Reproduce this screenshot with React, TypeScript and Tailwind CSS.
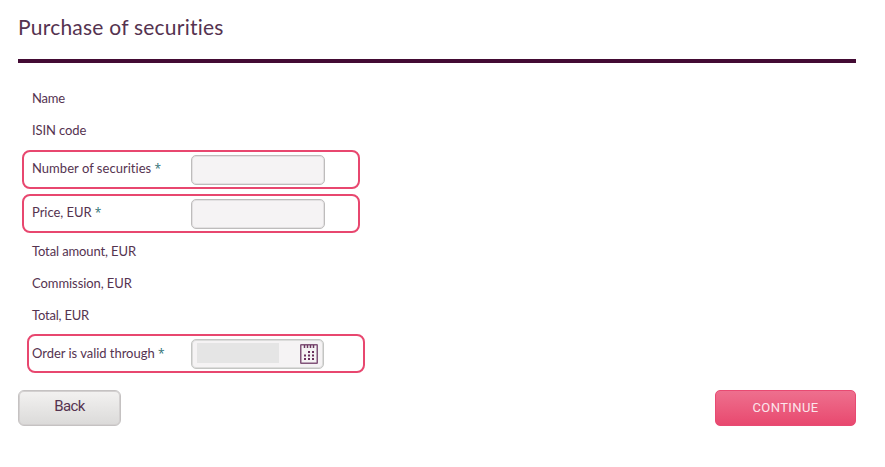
import React from 'react';
import { clsx } from 'clsx';

interface FieldRowProps {
    label: string;
    labelClass?: string;
    className?: string;
    children?: React.ReactNode;
}

const PlainRow: React.FC<FieldRowProps> = ({ label, labelClass }) => (
    <div className="flex h-8 items-center pt-0.5 pl-8">
        <span className={clsx('whitespace-nowrap', labelClass)}>{label}</span>
    </div>
);

const RequiredRow: React.FC<FieldRowProps> = ({ label, labelClass, className, children }) => (
    <div className={clsx('flex h-[39px] w-[338px] items-center rounded-lg border-2 border-[#e8476f]', className)}>
        <label className={clsx('w-[159px] shrink-0 whitespace-nowrap', labelClass)}>
            {label} <span className="font-['Open_Sans',sans-serif] text-[12px] leading-none text-[#2f7276]">*</span>
        </label>
        {children}
    </div>
);

const CalendarIcon = () => (
    <svg width="18" height="20" viewBox="0 0 18 20" fill="none">
        <rect x="0.75" y="0.75" width="16.5" height="18.5" rx="0.5" stroke="#82557a" strokeWidth="1.5" />
        <path d="M4.5 1v3M7.5 1v3M10.5 1v3M13.5 1v3" stroke="#6d3861" strokeWidth="1.5" />
        <path
            d="M8 7h2v2H8zM12 7h2v2h-2zM4 10.5h2v2H4zM8 10.5h2v2H8zM12 10.5h2v2h-2zM4 14h2v2H4zM8 14h2v2H8zM12 14h2v2h-2z"
            fill="#6a2f5d"
        />
    </svg>
);

export default function App() {
    return (
        <div className="h-[467px] w-[885px] overflow-hidden bg-white pr-[29px] font-['Lato',sans-serif] text-[13px] text-[#553350] [font-variant-ligatures:none]">
            {/* Header */}
            <header className="ml-[18px] h-[63px] border-b-4 border-[#430b34] pt-3">
                <h1 className="text-[21px] leading-[30px] tracking-[0.23px] whitespace-nowrap">Purchase of securities</h1>
            </header>

            {/* Order form */}
            <form className="flex flex-col pt-[19px]">
                <PlainRow label="Name" labelClass="tracking-[-0.2px]" />
                <PlainRow label="ISIN code" labelClass="tracking-[-0.1px]" />
                <RequiredRow label="Number of securities" className="mt-1 ml-[22px] pl-2" labelClass="pb-0.5 tracking-[0.03px]">
                    <input className="h-[30px] w-[134px] rounded-[5px] border border-[#bebcbc] bg-[#f5f3f4] inset-ring inset-ring-[#e3e1e2]" />
                </RequiredRow>
                <RequiredRow label="Price, EUR" className="mt-[5px] ml-[22px] pl-2" labelClass="pb-0.5 tracking-[-0.05px]">
                    <input className="h-[30px] w-[134px] rounded-[5px] border border-[#bebcbc] bg-[#f5f3f4] inset-ring inset-ring-[#e3e1e2]" />
                </RequiredRow>
                <div className="mt-0.5">
                    <PlainRow label="Total amount, EUR" labelClass="tracking-[-0.12px]" />
                    <PlainRow label="Commission, EUR" labelClass="tracking-[-0.07px]" />
                    <PlainRow label="Total, EUR" labelClass="tracking-[-0.2px]" />
                </div>
                <RequiredRow label="Order is valid through" className="mt-[3px] ml-[27px] pl-[3px]" labelClass="tracking-[-0.03px]">
                    <div className="flex h-[30px] w-[133px] items-center justify-between rounded-[5px] border border-[#c4c5c3] bg-[#f5f3f4] px-[5px] inset-ring inset-ring-[#dcdcdb]">
                        <div className="mb-0.5 h-5 w-[82px] bg-[#e5e5e5]" />
                        <CalendarIcon />
                    </div>
                </RequiredRow>

                {/* Actions */}
                <div className="mt-[17px] ml-[18px] flex justify-between">
                    <button
                        type="button"
                        className="h-9 w-[103px] rounded-[6px] border border-[#c5c2c2] bg-linear-to-b from-[#f3f2f1] to-[#dbdad9] pb-1 font-['Roboto',sans-serif] text-[15px] tracking-[-0.6px] inset-ring inset-ring-[#d3d0d0]"
                    >
                        Back
                    </button>
                    <button
                        type="button"
                        className="h-9 w-[141px] rounded-[5px] border border-[#e84a72] bg-linear-to-b from-[#ee6f8e] to-[#e8486f] pb-px font-['Roboto',sans-serif] text-[13px] tracking-[0.4px] text-[#fbe6ec]"
                    >
                        CONTINUE
                    </button>
                </div>
            </form>
        </div>
    );
}
